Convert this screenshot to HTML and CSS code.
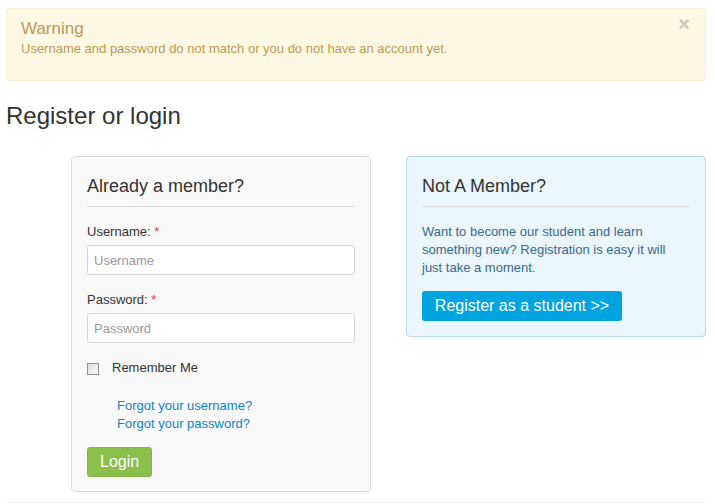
FILE: index.html
```html
<!DOCTYPE html>
<html>
<head>
<meta charset="utf-8">
<link rel="stylesheet" href="styles.css">
</head>
<body>
<div class="page">
  <div class="alert">
    <span class="close">&#215;</span>
    <div class="alert-title">Warning</div>
    <div class="alert-msg">Username and password do not match or you do not have an account yet.</div>
  </div>
  <h1 class="page-title">Register or login</h1>
  <div class="row">
    <div class="panel login">
      <h2 class="panel-title">Already a member?</h2>
      <label class="lbl">Username: <span class="req">*</span></label>
      <input class="field" type="text" placeholder="Username">
      <label class="lbl">Password: <span class="req">*</span></label>
      <input class="field" type="password" placeholder="Password">
      <div class="remember"><span class="box"></span><span>Remember Me</span></div>
      <div class="links">
        <a href="#">Forgot your username?</a>
        <a href="#">Forgot your password?</a>
      </div>
      <button class="btn-login">Login</button>
    </div>
    <div class="panel register">
      <h2 class="panel-title">Not A Member?</h2>
      <p class="reg-text">Want to become our student and learn something new? Registration is easy it will just take a moment.</p>
      <button class="btn-reg">Register as a student &gt;&gt;</button>
    </div>
  </div>
  <div class="footer-line"></div>
</div>
</body>
</html>
```
FILE: styles.css
```css
html, body { margin: 0; padding: 0; background: #fff; }
body { font-family: "Liberation Sans", Arial, sans-serif; color: #333; }
.page { width: 700px; margin: 0 0 0 6px; padding-top: 8px; }
.alert {
  position: relative;
  background: #fcf8e3;
  border: 1px solid #fbeed5;
  border-radius: 4px;
  color: #c09853;
  padding: 10px 14px 0 14px;
  height: 61px;
}
.close {
  position: absolute; right: 15px; top: 4px;
  font-size: 20px; font-weight: bold; color: #c8c8c8;
}
.alert-title { font-size: 17px; line-height: 20px; }
.alert-msg { font-size: 13px; line-height: 18px; margin-top: 1px; }
.page-title {
  font-size: 24px; font-weight: normal; color: #333;
  margin: 20px 0 0 0; line-height: 30px;
}
.row { display: flex; gap: 35px; padding-left: 65px; margin-top: 25px; align-items: flex-start; }
.panel {
  width: 268px;
  border-radius: 4px;
  padding: 17px 15px 14px 15px;
}
.login { background: #f9f9f9; border: 1px solid #dcdcdc; }
.register { background: #eaf5fc; border: 1px solid #b7d7ec; padding-bottom: 15px; }
.panel-title {
  font-size: 18px; font-weight: normal; color: #333;
  margin: 0; line-height: 24px; padding-bottom: 8px;
  border-bottom: 1px solid #dcdcdc;
}
.lbl { display: block; font-size: 13px; line-height: 18px; margin-top: 16px; color: #333; }
.req { color: #e23d2e; }
.field {
  display: block; box-sizing: border-box; width: 268px; height: 30px;
  margin-top: 4px; padding: 4px 6px;
  border: 1px solid #d6d6d6; border-radius: 3px; background: #fff;
  font-family: "Liberation Sans", Arial, sans-serif; font-size: 13px; color: #555;
}
.field::placeholder { color: #999; }
.remember { display: flex; align-items: center; gap: 13px; margin-top: 16px; font-size: 13px; color: #333; line-height: 18px; }
.box {
  width: 10px; height: 10px; border: 1px solid #8f8f8f;
  background: linear-gradient(135deg, #dcdcdc, #f6f6f6);
  margin-top: 2px;
}
.links { display: flex; flex-direction: column; padding-left: 30px; margin-top: 20px; }
.links a { color: #0b85c9; text-decoration: none; font-size: 13px; line-height: 18px; }
.btn-login {
  margin-top: 14px; height: 30px; padding: 0 12px;
  background: #8ac04b; border: 1px solid #82b544; border-radius: 3px;
  color: #fff; font-family: "Liberation Sans", Arial, sans-serif; font-size: 16px;
}
.reg-text { margin: 16px 0 0 0; padding-right: 12px; font-size: 13px; line-height: 18px; color: #3a6a8e; }
.btn-reg {
  margin-top: 14px; height: 30px; width: 200px;
  background: #00a4e0; border: none; border-radius: 3px;
  color: #fff; font-family: "Liberation Sans", Arial, sans-serif; font-size: 16px;
}
.footer-line { margin-top: 10px; border-top: 1px solid #eee; }
```
